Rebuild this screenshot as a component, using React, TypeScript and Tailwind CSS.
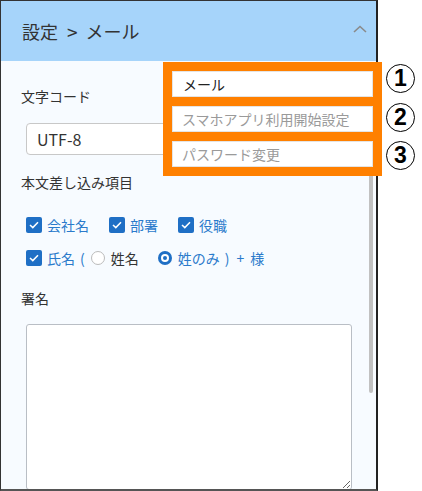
import React from "react";

const Check = () => (
  <span className="w-[16px] h-[16px] rounded-[2px] bg-[#1f6fc5] flex items-center justify-center shrink-0">
    <svg width="10" height="8" viewBox="0 0 10 8" fill="none">
      <path d="M1 4 L3.8 6.6 L9 1.2" stroke="white" strokeWidth="1.5" />
    </svg>
  </span>
);

const Circle = ({ n }: { n: string }) => (
  <div className="w-[29px] h-[29px] rounded-full border-[1.5px] border-black flex items-center justify-center bg-white">
    <span className="text-[23px] font-bold leading-none text-black" style={{ fontFamily: "'Liberation Sans', Arial, sans-serif" }}>{n}</span>
  </div>
);

export default function App() {
  return (
    <div
      className="relative w-[422px] h-[491px] bg-white overflow-hidden"
      style={{ fontFamily: "'Noto Sans CJK JP', 'Noto Sans', sans-serif" }}
    >
      <div className="w-[378px] h-[491px] border-l border-t border-r-2 border-b-2 border-l-[#333] border-t-[#333] border-r-[#222] border-b-[#555] flex flex-col">
        <div className="h-[60px] shrink-0 bg-[#a6d4fa] flex items-center justify-between pl-[21px] pr-[8px]">
          <div className="flex items-center text-[18px] text-[#333] leading-none">
            <span>設定</span>
            <span className="ml-[9px] text-[19px]">&gt;</span>
            <span className="ml-[8px]">メール</span>
          </div>
          <svg width="14" height="8" viewBox="0 0 14 8" fill="none" className="mr-[1px] -mt-[5px]">
            <path d="M1 7 L7 1.5 L13 7" stroke="#8a8a8a" strokeWidth="1.6" />
          </svg>
        </div>
        <div className="flex-1 bg-[#f7fbff] relative overflow-hidden pl-[20px]">
          <div className="mt-[25px] text-[14px] leading-[20px] text-[#333]">文字コード</div>
          <div className="mt-[17px] ml-[5px] w-[325px] h-[32px] bg-white border border-[#c8c8c8] rounded-[4px] flex items-center pl-[10px] text-[16px] text-[#333]">
            UTF-8
          </div>
          <div className="mt-[17px] text-[14px] leading-[20px] text-[#333]">本文差し込み項目</div>
          <div className="mt-[23px] ml-[5px] h-[20px] flex items-center text-[14px] text-[#2a7acb]">
            <Check />
            <span className="ml-[5px] w-[62px]">会社名</span>
            <Check />
            <span className="ml-[5px] w-[48px]">部署</span>
            <Check />
            <span className="ml-[5px]">役職</span>
          </div>
          <div className="mt-[13px] ml-[5px] h-[20px] flex items-center text-[14px] text-[#2a7acb]">
            <Check />
            <span className="ml-[5px]">氏名</span>
            <span className="ml-[5px]">(</span>
            <span className="ml-[6px] w-[14px] h-[14px] rounded-full border border-[#bbb] bg-white shrink-0" />
            <span className="ml-[6px] w-[47px] text-[#333]">姓名</span>
            <span className="w-[14px] h-[14px] rounded-full bg-[#1f6fc5] flex items-center justify-center shrink-0">
              <span className="w-[8px] h-[8px] rounded-full bg-white flex items-center justify-center">
                <span className="w-[4px] h-[4px] rounded-full bg-[#1f6fc5]" />
              </span>
            </span>
            <span className="ml-[6px]">姓のみ</span>
            <span className="ml-[5px]">)</span>
            <span className="ml-[7px]">+</span>
            <span className="ml-[6px]">様</span>
          </div>
          <div className="mt-[20px] text-[14px] leading-[20px] text-[#333]">署名</div>
          <textarea className="block mt-[16px] ml-[5px] w-[326px] h-[166px] bg-white border border-[#b9bec5] rounded-[3px]" />
          <div className="absolute left-[368px] top-[4px] w-[4px] h-[328px] rounded-[2px] bg-[#c1c1c1]" />
        </div>
      </div>

      <div className="absolute left-[163px] top-[62px] w-[219px] h-[114px] bg-[#ff8000] p-[9px] flex flex-col gap-[9px]">
        <div className="h-[26px] bg-white border border-[#e4e4e4] flex items-center pl-[10px] text-[14px] text-[#222]">メール</div>
        <div className="h-[26px] bg-white border border-[#e4e4e4] flex items-center pl-[9px] text-[14px] text-[#9a9a9a]">スマホアプリ利用開始設定</div>
        <div className="h-[26px] bg-white border border-[#e4e4e4] flex items-center pl-[9px] text-[14px] text-[#9a9a9a]">パスワード変更</div>
      </div>

      <div className="absolute left-[386px] top-[64px]"><Circle n="1" /></div>
      <div className="absolute left-[386px] top-[103px]"><Circle n="2" /></div>
      <div className="absolute left-[386px] top-[141px]"><Circle n="3" /></div>
    </div>
  );
}
